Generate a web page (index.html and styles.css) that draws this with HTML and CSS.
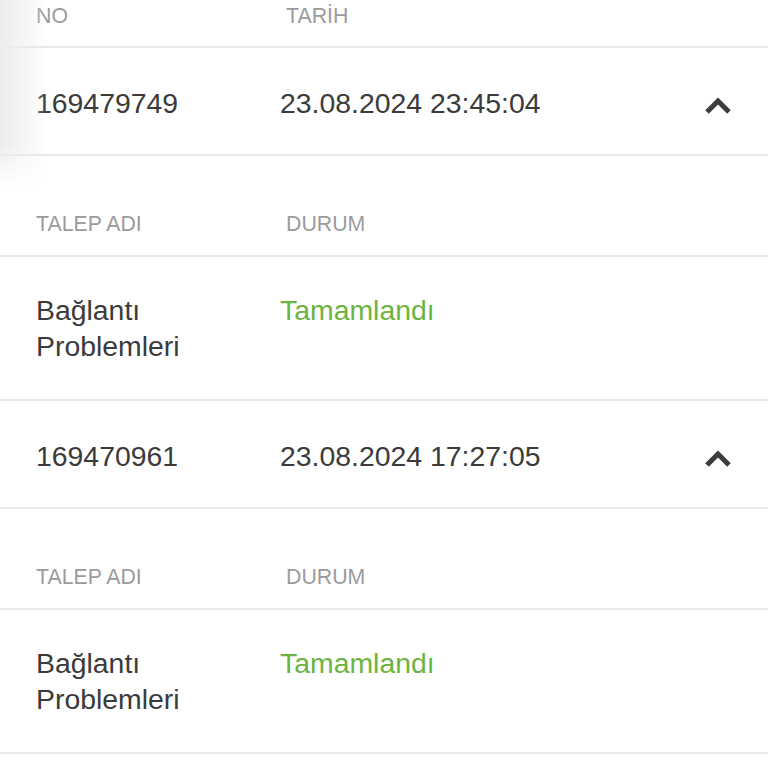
FILE: index.html
```html
<!DOCTYPE html>
<html lang="tr">
  <head>
    <meta charset="UTF-8" />
    <meta name="viewport" content="width=device-width, initial-scale=1.0" />
    <title>Taleplerim</title>
    <link rel="stylesheet" href="styles.css">
  </head>
  <body>
    <div class="list">
      <div class="top-block">
        <div class="head-row">
          <span class="col-no">NO</span>
          <span class="col-date">TARİH</span>
        </div>

        <div class="ticket-row">
          <span class="col-no">169479749</span>
          <span class="col-date">23.08.2024 23:45:04</span>
          <svg class="chevron" width="28" height="20" viewBox="0 0 28 20">
            <polyline points="3,16 14,5 25,16" />
          </svg>
        </div>
      </div>

      <div class="detail-head">
        <span class="col-no">TALEP ADI</span>
        <span class="col-date">DURUM</span>
      </div>
      <div class="detail-row">
        <span class="col-no">Bağlantı<br />Problemleri</span>
        <span class="col-date status">Tamamlandı</span>
      </div>

      <div class="ticket-row">
        <span class="col-no">169470961</span>
        <span class="col-date">23.08.2024 17:27:05</span>
        <svg class="chevron" width="28" height="20" viewBox="0 0 28 20">
          <polyline points="3,16 14,5 25,16" />
        </svg>
      </div>

      <div class="detail-head">
        <span class="col-no">TALEP ADI</span>
        <span class="col-date">DURUM</span>
      </div>
      <div class="detail-row">
        <span class="col-no">Bağlantı<br />Problemleri</span>
        <span class="col-date status">Tamamlandı</span>
      </div>
    </div>
  </body>
</html>
```

FILE: styles.css
```css
body {
  margin: 0;
  background-color: #fff;
  font-family: "Liberation Sans", Arial, sans-serif;
  color: #3b3b3b;
}
.list {
  display: flex;
  flex-direction: column;
}
.top-block {
  position: relative;
}
/* soft shadow on the left edge */
.top-block::before {
  content: "";
  position: absolute;
  left: 0;
  top: 0;
  bottom: -30px;
  width: 48px;
  background: linear-gradient(to right, #ececec, rgba(255, 255, 255, 0));
  -webkit-mask-image: linear-gradient(to bottom, #000 78%, transparent);
  mask-image: linear-gradient(to bottom, #000 78%, transparent);
  pointer-events: none;
}
.head-row,
.ticket-row,
.detail-head,
.detail-row {
  display: flex;
  align-items: flex-start;
  padding-left: 36px;
  border-bottom: 2px solid #e8e8e8;
}
.col-no {
  width: 244px;
  flex-shrink: 0;
}
.head-row,
.detail-head {
  font-size: 21.3px;
  line-height: 24px;
  color: #9b9b9b;
}
.head-row .col-date,
.detail-head .col-date {
  padding-left: 6px;
}
.head-row {
  padding-top: 4px;
  padding-bottom: 18px;
}
.ticket-row {
  font-size: 28.4px;
  line-height: 32px;
  padding-top: 39px;
  padding-bottom: 35px;
  padding-right: 36px;
}
.chevron {
  margin-left: auto;
  margin-top: 9px;
  fill: none;
  stroke: #3c3c3c;
  stroke-width: 5;
}
.detail-head {
  padding-top: 56px;
  padding-bottom: 19px;
}
.detail-row {
  font-size: 28.4px;
  line-height: 36px;
  padding-top: 35px;
  padding-bottom: 35px;
}
.status {
  color: #6db33f;
}
```
